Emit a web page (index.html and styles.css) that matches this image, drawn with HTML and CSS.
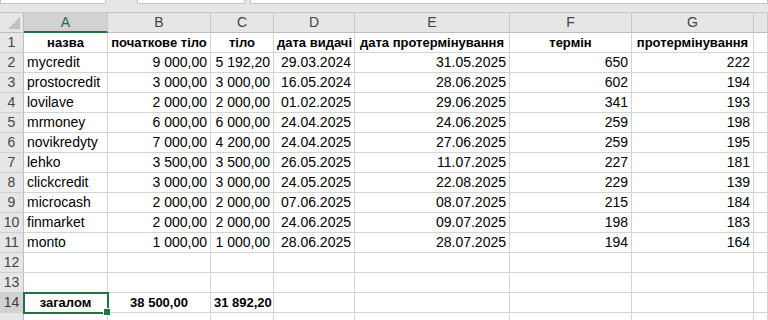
FILE: index.html
```html
<!DOCTYPE html>
<html lang="uk">
<head>
    <meta charset="UTF-8">
    <title>Кредити</title>
    <link rel="stylesheet" href="styles.css">
</head>
<body>

    <!-- bottoms of the name box and formula bar -->
    <div class="toolbar">
        <div class="box box-name"></div>
        <div class="box box-fx"></div>
        <div class="box box-formula"></div>
    </div>

    <div class="sheet">
        <!-- column headers -->
        <div class="corner">
            <svg width="12" height="12" viewBox="0 0 12 12"><polygon points="12,0 12,12 0,12" fill="#c0c0c0"/></svg>
        </div>
        <div class="colhead active">A</div>
        <div class="colhead">B</div>
        <div class="colhead">C</div>
        <div class="colhead">D</div>
        <div class="colhead">E</div>
        <div class="colhead">F</div>
        <div class="colhead">G</div>
        <div class="colhead"></div>

        <!-- row 1 -->
        <div class="rowhead">1</div>
        <div class="cell bold center">назва</div>
        <div class="cell bold center">початкове тіло</div>
        <div class="cell bold center">тіло</div>
        <div class="cell bold center">дата видачі</div>
        <div class="cell bold center">дата протермінування</div>
        <div class="cell bold center">термін</div>
        <div class="cell bold center">протермінування</div>
        <div class="cell"></div>

        <div class="rowhead">2</div>
        <div class="cell">mycredit</div>
        <div class="cell num">9 000,00</div>
        <div class="cell num">5 192,20</div>
        <div class="cell num">29.03.2024</div>
        <div class="cell num">31.05.2025</div>
        <div class="cell num">650</div>
        <div class="cell num">222</div>
        <div class="cell"></div>

        <div class="rowhead">3</div>
        <div class="cell">prostocredit</div>
        <div class="cell num">3 000,00</div>
        <div class="cell num">3 000,00</div>
        <div class="cell num">16.05.2024</div>
        <div class="cell num">28.06.2025</div>
        <div class="cell num">602</div>
        <div class="cell num">194</div>
        <div class="cell"></div>

        <div class="rowhead">4</div>
        <div class="cell">lovilave</div>
        <div class="cell num">2 000,00</div>
        <div class="cell num">2 000,00</div>
        <div class="cell num">01.02.2025</div>
        <div class="cell num">29.06.2025</div>
        <div class="cell num">341</div>
        <div class="cell num">193</div>
        <div class="cell"></div>

        <div class="rowhead">5</div>
        <div class="cell">mrmoney</div>
        <div class="cell num">6 000,00</div>
        <div class="cell num">6 000,00</div>
        <div class="cell num">24.04.2025</div>
        <div class="cell num">24.06.2025</div>
        <div class="cell num">259</div>
        <div class="cell num">198</div>
        <div class="cell"></div>

        <div class="rowhead">6</div>
        <div class="cell">novikredyty</div>
        <div class="cell num">7 000,00</div>
        <div class="cell num">4 200,00</div>
        <div class="cell num">24.04.2025</div>
        <div class="cell num">27.06.2025</div>
        <div class="cell num">259</div>
        <div class="cell num">195</div>
        <div class="cell"></div>

        <div class="rowhead">7</div>
        <div class="cell">lehko</div>
        <div class="cell num">3 500,00</div>
        <div class="cell num">3 500,00</div>
        <div class="cell num">26.05.2025</div>
        <div class="cell num">11.07.2025</div>
        <div class="cell num">227</div>
        <div class="cell num">181</div>
        <div class="cell"></div>

        <div class="rowhead">8</div>
        <div class="cell">clickcredit</div>
        <div class="cell num">3 000,00</div>
        <div class="cell num">3 000,00</div>
        <div class="cell num">24.05.2025</div>
        <div class="cell num">22.08.2025</div>
        <div class="cell num">229</div>
        <div class="cell num">139</div>
        <div class="cell"></div>

        <div class="rowhead">9</div>
        <div class="cell">microcash</div>
        <div class="cell num">2 000,00</div>
        <div class="cell num">2 000,00</div>
        <div class="cell num">07.06.2025</div>
        <div class="cell num">08.07.2025</div>
        <div class="cell num">215</div>
        <div class="cell num">184</div>
        <div class="cell"></div>

        <div class="rowhead">10</div>
        <div class="cell">finmarket</div>
        <div class="cell num">2 000,00</div>
        <div class="cell num">2 000,00</div>
        <div class="cell num">24.06.2025</div>
        <div class="cell num">09.07.2025</div>
        <div class="cell num">198</div>
        <div class="cell num">183</div>
        <div class="cell"></div>

        <div class="rowhead">11</div>
        <div class="cell">monto</div>
        <div class="cell num">1 000,00</div>
        <div class="cell num">1 000,00</div>
        <div class="cell num">28.06.2025</div>
        <div class="cell num">28.07.2025</div>
        <div class="cell num">194</div>
        <div class="cell num">164</div>
        <div class="cell"></div>

        <div class="rowhead">12</div>
        <div class="cell"></div><div class="cell"></div><div class="cell"></div><div class="cell"></div>
        <div class="cell"></div><div class="cell"></div><div class="cell"></div><div class="cell"></div>

        <div class="rowhead">13</div>
        <div class="cell"></div><div class="cell"></div><div class="cell"></div><div class="cell"></div>
        <div class="cell"></div><div class="cell"></div><div class="cell"></div><div class="cell"></div>

        <!-- totals -->
        <div class="rowhead active-row">14</div>
        <div class="cell bold center selected">загалом<span class="handle"></span></div>
        <div class="cell bold center">38 500,00</div>
        <div class="cell bold num">31 892,20</div>
        <div class="cell"></div>
        <div class="cell"></div>
        <div class="cell"></div>
        <div class="cell"></div>
        <div class="cell"></div>

        <!-- next row, only its top shows -->
        <div class="rowhead"></div>
        <div class="cell"></div><div class="cell"></div><div class="cell"></div><div class="cell"></div>
        <div class="cell"></div><div class="cell"></div><div class="cell"></div><div class="cell"></div>
    </div>

</body>
</html>
```

FILE: styles.css
```css
/* General Styling */
body {
    margin: 0;
    background: #fff;
    font-family: "Liberation Sans", Arial, sans-serif;
    font-size: 14px;
    color: #000;
    overflow: hidden;
}

/* Toolbar strip above the grid */
.toolbar {
    height: 13px;
    background: #e6e6e6;
    border-bottom: 1px solid #c8c8c8;
    box-sizing: border-box;
    display: flex;
}

.box {
    height: 4px;
    background: #fff;
    border: 1px solid #c6c6c6;
    border-top: none;
    box-sizing: border-box;
}

.box-name {
    width: 106px;
}

.box-fx {
    width: 108px;
    margin-left: 31px;
}

.box-formula {
    flex: 1;
    margin-left: 5px;
}

/* Grid */
.sheet {
    display: grid;
    grid-template-columns: 24px 84px 103px 63px 81px 155px 122px 122px 1fr;
    grid-auto-rows: 20px;
}

.corner,
.colhead,
.rowhead,
.cell {
    box-sizing: border-box;
    white-space: nowrap;
    overflow: hidden;
}

.corner {
    background: #e6e6e6;
    border-right: 1px solid #bdbdbd;
    border-bottom: 1px solid #bdbdbd;
    display: flex;
    align-items: flex-end;
    justify-content: flex-end;
    padding: 0 3px 3px 0;
}

.colhead {
    background: #e6e6e6;
    border-right: 1px solid #c8c8c8;
    border-bottom: 1px solid #bdbdbd;
    color: #444;
    text-align: center;
    line-height: 19px;
}

.colhead.active {
    background: #d2d2d2;
    color: #1d6b40;
    border-bottom: 2px solid #217346;
}

.rowhead {
    background: #e6e6e6;
    border-right: 1px solid #bdbdbd;
    border-bottom: 1px solid #d0d0d0;
    color: #444;
    text-align: center;
    line-height: 19px;
}

.rowhead.active-row {
    background: #d2d2d2;
    color: #3c3c3c;
}

.cell {
    border-right: 1px solid #d4d4d4;
    border-bottom: 1px solid #d4d4d4;
    padding: 0 3px;
    line-height: 19px;
}

.num {
    text-align: right;
}

.center {
    text-align: center;
}

.bold {
    font-weight: bold;
    font-size: 13px;
}

/* Active cell */
.selected {
    position: relative;
    overflow: visible;
    outline: 2px solid #217346;
    outline-offset: -1px;
}

.handle {
    position: absolute;
    right: -4px;
    bottom: -4px;
    width: 6px;
    height: 6px;
    background: #217346;
    border: 1px solid #fff;
}
```
